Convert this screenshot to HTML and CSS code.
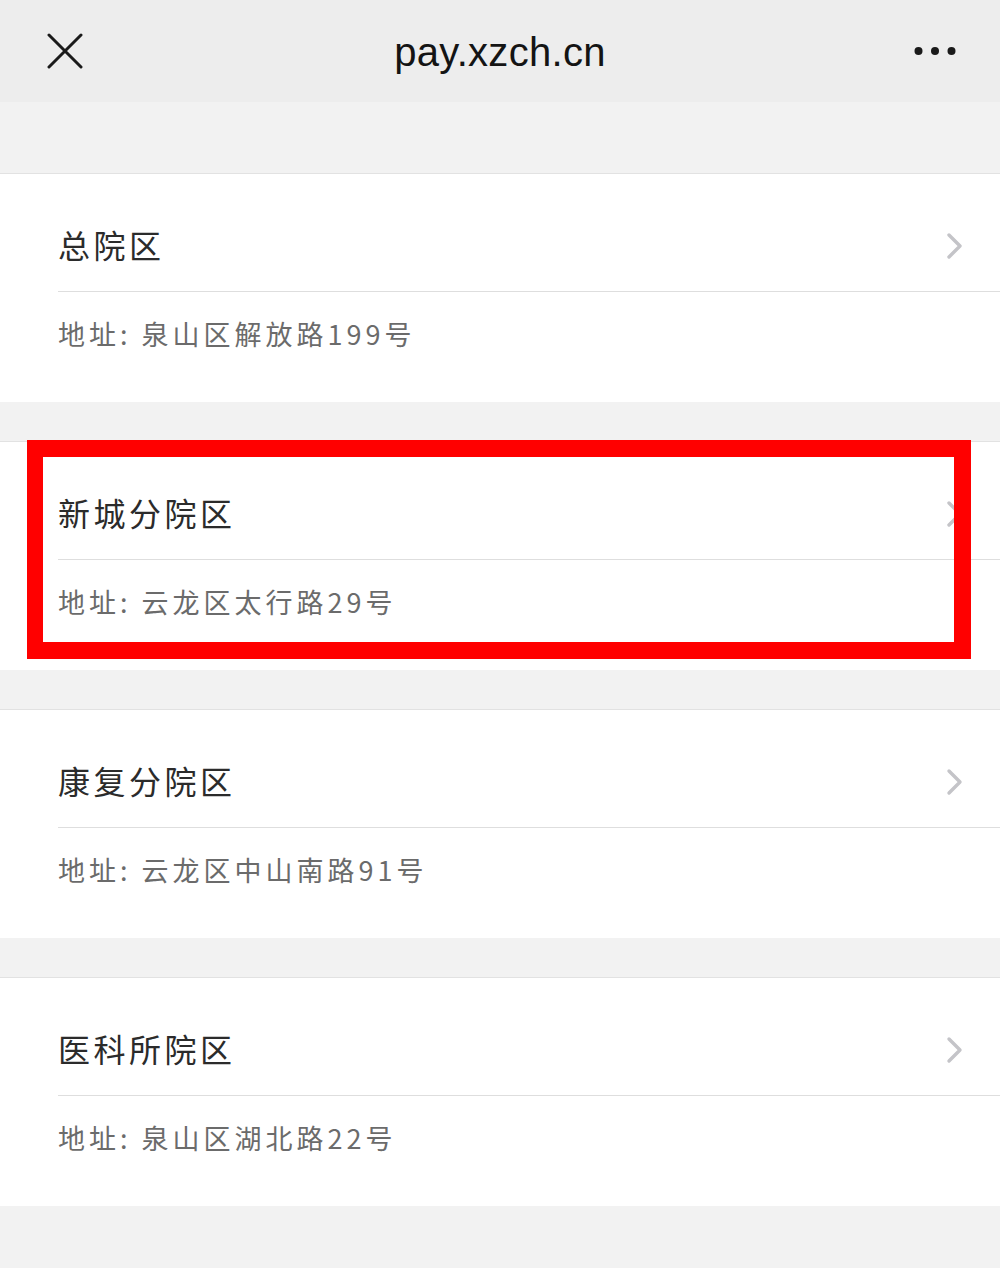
FILE: index.html
```html
<!DOCTYPE html>
<html lang="zh-CN">
<head>
<meta charset="utf-8">
<title>pay.xzch.cn</title>
<link rel="stylesheet" href="styles.css">
</head>
<body>
<header class="topbar">
  <svg class="close" width="36" height="36" viewBox="0 0 36 36"><path d="M2 2 L34 34 M34 2 L2 34" stroke="#1a1a1a" stroke-width="3" stroke-linecap="round" fill="none"/></svg>
  <div class="title">pay.xzch.cn</div>
  <svg class="more" width="42" height="10" viewBox="0 0 42 10"><circle cx="4.5" cy="5" r="4" fill="#1a1a1a"/><circle cx="21" cy="5" r="4" fill="#1a1a1a"/><circle cx="37.5" cy="5" r="4" fill="#1a1a1a"/></svg>
</header>
<main class="list">
  <section class="card">
    <div class="row-title"><span>总院区</span><svg class="chev" width="18" height="28" viewBox="0 0 18 28"><path d="M3 3 L14 14 L3 25" stroke="#c4c4c8" stroke-width="3.4" fill="none" stroke-linecap="round" stroke-linejoin="round"/></svg></div>
    <div class="row-addr">地址: 泉山区解放路199号</div>
  </section>
  <section class="card marked">
    <div class="row-title"><span>新城分院区</span><svg class="chev" width="18" height="28" viewBox="0 0 18 28"><path d="M3 3 L14 14 L3 25" stroke="#c4c4c8" stroke-width="3.4" fill="none" stroke-linecap="round" stroke-linejoin="round"/></svg></div>
    <div class="row-addr">地址: 云龙区太行路29号</div>
    <div class="redbox"></div>
  </section>
  <section class="card">
    <div class="row-title"><span>康复分院区</span><svg class="chev" width="18" height="28" viewBox="0 0 18 28"><path d="M3 3 L14 14 L3 25" stroke="#c4c4c8" stroke-width="3.4" fill="none" stroke-linecap="round" stroke-linejoin="round"/></svg></div>
    <div class="row-addr">地址: 云龙区中山南路91号</div>
  </section>
  <section class="card">
    <div class="row-title"><span>医科所院区</span><svg class="chev" width="18" height="28" viewBox="0 0 18 28"><path d="M3 3 L14 14 L3 25" stroke="#c4c4c8" stroke-width="3.4" fill="none" stroke-linecap="round" stroke-linejoin="round"/></svg></div>
    <div class="row-addr">地址: 泉山区湖北路22号</div>
  </section>
</main>
</body>
</html>
```
FILE: styles.css
```css
html, body {
  margin: 0;
  padding: 0;
}
body {
  background: #f2f2f2;
  font-family: "Noto Sans CJK SC", "Noto Sans", "Liberation Sans", sans-serif;
  width: 1000px;
  height: 1268px;
  overflow: hidden;
}
.topbar {
  height: 102px;
  background: #ededed;
  display: flex;
  align-items: center;
  justify-content: space-between;
  padding: 0 44px 0 47px;
  box-sizing: border-box;
  position: relative;
}
.close {
  display: block;
}
.title {
  position: absolute;
  left: 0;
  right: 0;
  top: 0;
  height: 102px;
  line-height: 104px;
  text-align: center;
  font-family: "Liberation Sans", "Noto Sans", sans-serif;
  font-size: 40px;
  color: #141414;
  letter-spacing: 0.3px;
  pointer-events: none;
}
.more {
  display: block;
}
.list {
  padding-top: 71px;
  display: flex;
  flex-direction: column;
  gap: 39px;
}
.card {
  background: #fff;
  border-top: 1px solid #e2e2e2;
  position: relative;
  padding-left: 58px;
}
.row-title {
  height: 118px;
  display: flex;
  align-items: center;
  justify-content: space-between;
  padding: 26px 36px 0 0;
  border-bottom: 1px solid #dedede;
  font-size: 32px;
  color: #2b2b2b;
  letter-spacing: 3.5px;
  box-sizing: border-box;
}
.row-title span {
  margin-bottom: 3px;
}
.chev {
  display: block;
}
.row-addr {
  height: 110px;
  display: flex;
  align-items: center;
  font-size: 27px;
  color: #6b6b6b;
  letter-spacing: 4px;
  padding-bottom: 28px;
  box-sizing: border-box;
}
.redbox {
  position: absolute;
  left: 27px;
  top: -2px;
  width: 944px;
  height: 219px;
  box-sizing: border-box;
  border-style: solid;
  border-color: #ff0000;
  border-width: 17px 17px 17px 16px;
}
```
